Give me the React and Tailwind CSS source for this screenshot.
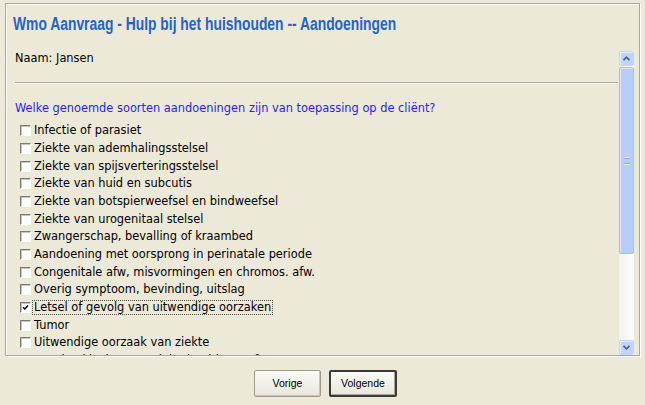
import React from 'react';

const items = [
  'Infectie of parasiet',
  'Ziekte van ademhalingsstelsel',
  'Ziekte van spijsverteringsstelsel',
  'Ziekte van huid en subcutis',
  'Ziekte van botspierweefsel en bindweefsel',
  'Ziekte van urogenitaal stelsel',
  'Zwangerschap, bevalling of kraambed',
  'Aandoening met oorsprong in perinatale periode',
  'Congenitale afw, misvormingen en chromos. afw.',
  'Overig symptoom, bevinding, uitslag',
  'Letsel of gevolg van uitwendige oorzaken',
  'Tumor',
  'Uitwendige oorzaak van ziekte',
  'Overige klachten en ziektebeelden en factoren',
];

const Checkbox = ({ checked }) => (
  <span className="relative inline-block h-[11px] w-[11px] shrink-0 border-t border-l border-t-[#7a7a7a] border-l-[#7a7a7a] border-r border-b border-r-white border-b-white bg-white shadow-[inset_1px_1px_0_#c8c4b8]">
    {checked && (
      <svg viewBox="0 0 9 9" className="absolute left-[0px] top-[0px] h-[9px] w-[9px]">
        <path d="M2 4.2 L3.8 6 L7 2.5" fill="none" stroke="#000" strokeWidth="1.5" />
      </svg>
    )}
  </span>
);

const ArrowButton = ({ down }) => (
  <div className="flex h-[15px] w-[15px] items-center justify-center rounded-[2px] border border-[#c3d3fd] bg-[#c1d2fc] shadow-[inset_1px_1px_0_#e6eeff]">
    <svg viewBox="0 0 7 5" className="h-[5px] w-[7px]">
      <path d={down ? 'M0.5 0.8 L3.5 3.8 L6.5 0.8' : 'M0.5 4.2 L3.5 1.2 L6.5 4.2'} fill="none" stroke="#4d6185" strokeWidth="1.6" />
    </svg>
  </div>
);

const Scrollbar = () => (
  <div className="flex w-[15px] shrink-0 flex-col bg-gradient-to-r from-[#f3f1ec] to-[#fefefe]">
    <ArrowButton />
    <div className="mt-[1px] flex h-[187px] items-center justify-center rounded-[2px] border border-[#a8bff5] bg-[#b8cdf9] shadow-[inset_1px_1px_0_#dbe5fd]">
      <div className="flex h-[8px] w-[6px] flex-col justify-between border-y border-[#eef3ff]">
        <span className="h-px bg-[#8ca4dc]" />
        <span className="h-px bg-[#8ca4dc]" />
      </div>
    </div>
    <div className="flex-1" />
    <ArrowButton down />
  </div>
);

export default function App() {
  return (
    <div className="h-[405px] w-[645px] bg-[#ece9d8] px-[5px] pt-[3px] text-black" style={{ fontFamily: '"DejaVu Sans", Verdana, sans-serif' }}>
      <div className="flex h-[353px] flex-col border border-[#aca899] shadow-[inset_1px_1px_0_#ffffff,1px_1px_0_#ffffff]">
        <div className="h-[47px] shrink-0 pl-[7px] pt-[9px]">
          <h1 className="origin-left scale-x-[0.77] whitespace-nowrap font-['Liberation_Sans',Arial,sans-serif] text-[18px] font-bold leading-[22px] text-[#2563c7]">
            Wmo Aanvraag - Hulp bij het huishouden -- Aandoeningen
          </h1>
        </div>
        <div className="mr-[5px] flex h-[304px] overflow-hidden">
          <div className="flex-1 overflow-hidden pl-[9px] pr-[1px] text-[11.4px]">
            <div className="mt-[1px] h-[13px] leading-[13px]">Naam: Jansen</div>
            <div className="mt-[17px] h-[2px] border-t border-[#aca899] border-b border-b-white" />
            <div className="mt-[18px] h-[13px] leading-[13px] text-[#1f1ffb]">
              Welke genoemde soorten aandoeningen zijn van toepassing op de cliënt?
            </div>
            <div className="mt-[7px]">
              {items.map((label, i) => (
                <div key={label} className="flex h-[17.67px] items-center pl-[5px]">
                  <Checkbox checked={i === 10} />
                  <span className={`ml-[2px] px-[1px] leading-[13px] ${i === 10 ? 'outline outline-1 outline-dotted outline-[#555]' : ''}`}>
                    {label}
                  </span>
                </div>
              ))}
            </div>
          </div>
          <Scrollbar />
        </div>
      </div>
      <div className="mt-[14px] flex justify-center gap-[8px] pl-[6px] font-['Liberation_Sans',Tahoma,sans-serif] text-[10.5px]">
        <button className="h-[27px] w-[67px] rounded-[2px] border border-[#9e9b8c] bg-gradient-to-b from-[#fbfbf8] to-[#e9e7dc] shadow-[inset_-1px_-1px_0_#c9c6b7]">
          Vorige
        </button>
        <button className="h-[27px] w-[68px] rounded-[2px] border-2 border-[#3a3a3a] bg-gradient-to-b from-[#fbfbf8] to-[#e9e7dc] shadow-[inset_-1px_-1px_0_#aca899]">
          Volgende
        </button>
      </div>
    </div>
  );
}
